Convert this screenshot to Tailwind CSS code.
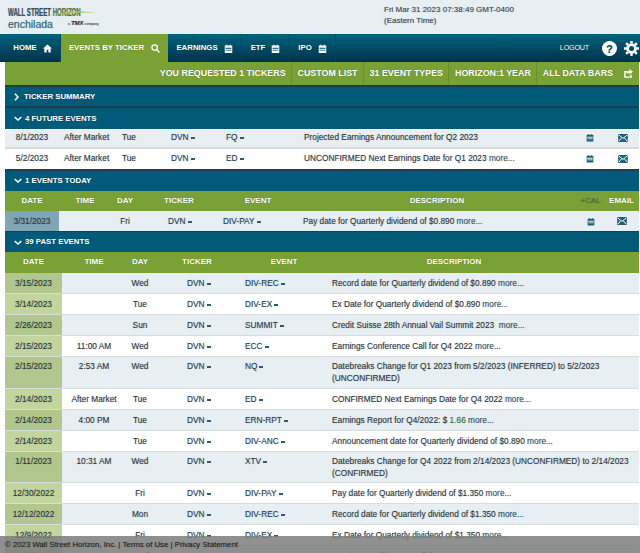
<!DOCTYPE html>
<html><head><meta charset="utf-8"><script src="https://cdn.jsdelivr.net/npm/@tailwindcss/browser@4"></script></head>
<body class="m-0 w-[640px] h-[553px] overflow-hidden relative bg-white font-['Liberation_Sans',Arial,sans-serif] text-[8.3px] text-[#2f3a40] [text-shadow:0_0_1px_rgba(30,40,50,.4)]">
<svg class="hidden"><defs>
<symbol id="cal" viewBox="0 0 12 12"><path fill="currentColor" d="M1 2h2V1h1.500v1h3V1H9v1h2v10H1zM2 5v1.200h8V5zm0 2.600v1.200h8V7.600z"/></symbol>
<symbol id="mail" viewBox="0 0 12 10"><path fill="currentColor" d="M0 0h12v10H0z"/><path fill="none" stroke="#fff" stroke-width="1.200" d="M.5 1 6 5.500 11.500 1M.8 9 4.500 4.500M11.200 9 7.500 4.500"/></symbol>
</defs></svg>

<header class="h-[34px] bg-[#e8eff2] flex">
  <div class="w-[384px] pl-2 pt-[7px] relative">
    <div class="font-bold text-[10px] leading-[11px] text-[#37505f] scale-x-[0.61] origin-left whitespace-nowrap">WALL STREET <span class="text-[#55743a]">HORIZON</span></div>
    <div class="flex items-center leading-[11px]"><span class="text-[10.5px] text-[#2d6a82]">enchilada</span><span class="ml-[15px] text-[3.500px] text-[#333] whitespace-nowrap">a <b class="text-[6px] italic">TMX</b> company</span></div>
    <svg class="absolute left-[50px] top-[10px] w-[46px] h-[7px]" viewBox="0 0 46 7"><path fill="#a9c46c" opacity=".85" d="M0 6C12 1 28 0 46 3 30 2.500 14 3 0 6z"/></svg>
  </div>
  <div class="pt-[4px] text-[#3c4a52] text-[8px] leading-[11px]"><div>Fri Mar 31 2023 07:38:49 GMT-0400</div><div>(Eastern Time)</div></div>
</header>

<nav class="h-[28px] bg-linear-to-b from-[#00627f] to-[#00344a] flex pl-[5px] text-white font-bold text-[7.800px] relative">
  <a class="w-[56px] flex items-center justify-center gap-[6px] border-r border-[#00475f]">HOME <svg class="w-[9px] h-[9px]" viewBox="0 0 10 10"><path fill="#fff" d="M5 .5 10 5H8.500v4.500H6V6.500H4v3H1.500V5H0z"/></svg></a>
  <a class="w-[107px] flex items-center justify-center gap-[7px] bg-[#7aa136]">EVENTS BY TICKER <svg class="w-[9px] h-[9px]" viewBox="0 0 10 10"><circle cx="4" cy="4" r="3" fill="none" stroke="#fff" stroke-width="1.400"/><path stroke="#fff" stroke-width="1.600" d="m6.200 6.200 3.200 3.200"/></svg></a>
  <a class="w-[74px] flex items-center justify-center gap-[6px] border-r border-[#00475f]">EARNINGS <svg class="w-[9px] h-[9px]"><use href="#cal"/></svg></a>
  <a class="w-[48px] flex items-center justify-center gap-[6px] border-r border-[#00475f]">ETF <svg class="w-[9px] h-[9px]"><use href="#cal"/></svg></a>
  <a class="w-[46px] flex items-center justify-center gap-[6px] border-r border-[#00475f]">IPO <svg class="w-[9px] h-[9px]"><use href="#cal"/></svg></a>
  <div class="flex-1 flex items-center justify-end pr-[1px] gap-[13px]">
    <span class="font-normal text-[7.200px] tracking-[-0.2px]">LOGOUT</span>
    <svg class="w-[15px] h-[15px]" viewBox="0 0 16 16"><circle cx="8" cy="8" r="8" fill="#fff"/><text x="8" y="12.500" text-anchor="middle" font-size="12" font-weight="700" fill="#004a63" font-family="Liberation Sans">?</text></svg>
    <svg class="w-[15px] h-[15px] -ml-[6px]" viewBox="0 0 16 16"><circle cx="8" cy="8" r="4.200" fill="none" stroke="#fff" stroke-width="3"/><path stroke="#fff" stroke-width="2.600" d="M8 0v3M8 13v3M0 8h3M13 8h3M2.300 2.300l2.100 2.100M11.600 11.600l2.100 2.100M2.300 13.700l2.100-2.100M11.600 4.400l2.100-2.100"/></svg>
  </div>
</nav>

<main class="ml-[5px] mr-px">
  <div class="h-[23px] bg-[#7aa136] flex justify-end items-center text-white font-bold text-[8.900px]">
    <span class="h-full flex items-center pl-[5px] pr-[5px] border-r border-[#6b8f2e]">YOU REQUESTED 1 TICKERS</span>
    <span class="h-full flex items-center pl-[6px] pr-[5px] border-r border-[#6b8f2e]">CUSTOM LIST</span>
    <span class="h-full flex items-center pl-[6px] pr-[5px] border-r border-[#6b8f2e]">31 EVENT TYPES</span>
    <span class="h-full flex items-center pl-[6px] pr-[5px] border-r border-[#6b8f2e]">HORIZON:1 YEAR</span>
    <span class="h-full flex items-center pl-[6px] pr-[6px] gap-[11px]">ALL DATA BARS <svg class="w-[9px] h-[9px]" viewBox="0 0 10 10"><path fill="none" stroke="#fff" stroke-width="1.500" d="M8 6.500V9H1V3h3"/><path fill="#fff" d="M6 0l4 3-4 3V4.500C4.500 4.500 3.500 5 3 6.500 3 3.500 4.500 2 6 2z"/></svg></span>
  </div>

  <div class="h-[21px] border-t-2 border-[#1d3f4d] bg-[#005a78] flex items-center pl-[9px] gap-[5px] text-white font-bold text-[7.800px]"><svg class="w-[5px] h-[8px]" viewBox="0 0 5 8"><path fill="none" stroke="#fff" stroke-width="1.600" d="m1 .7 3 3.300-3 3.300"/></svg>TICKER SUMMARY</div>
  <div class="h-[23px] border-t-2 border-[#1d3f4d] bg-[#005a78] flex items-center pl-[9px] gap-[3px] text-white font-bold text-[7.800px]"><svg class="w-[8px] h-[5px]" viewBox="0 0 8 5"><path fill="none" stroke="#fff" stroke-width="1.600" d="m.7 1 3.300 3 3.300-3"/></svg>4 FUTURE EVENTS</div>

  <div class="grid grid-cols-[54px_56px_49px_55px_78px_272px_42px_24px_1fr] h-[19px] pb-[2px] items-center bg-[#e8eff2] border-b-2 border-[#d8dcdc] mt-px">
    <span class="text-center">8/1/2023</span><span class="pl-[5px]">After Market</span><span class="pl-[7px]">Tue</span><span class="pl-[7px] text-[#1f4457]">DVN<i class="inline-block w-[4px] h-[2px] ml-[2px] align-middle bg-[#2c5a70]"></i></span><span class="pl-[7px] text-[#1f4457]">FQ<i class="inline-block w-[4px] h-[2px] ml-[2px] align-middle bg-[#2c5a70]"></i></span><span class="pl-[7px]">Projected Earnings Announcement for Q2 2023</span><svg class="w-[8px] h-[9px] mx-auto text-[#1f5f78]"><use href="#cal"/></svg><svg class="w-[10px] h-[8px] mx-auto text-[#1f5f78]"><use href="#mail"/></svg>
  </div>
  <div class="grid grid-cols-[54px_56px_49px_55px_78px_272px_42px_24px_1fr] h-[20px] pb-[1px] items-center bg-white">
    <span class="text-center">5/2/2023</span><span class="pl-[5px]">After Market</span><span class="pl-[7px]">Tue</span><span class="pl-[7px] text-[#1f4457]">DVN<i class="inline-block w-[4px] h-[2px] ml-[2px] align-middle bg-[#2c5a70]"></i></span><span class="pl-[7px] text-[#1f4457]">ED<i class="inline-block w-[4px] h-[2px] ml-[2px] align-middle bg-[#2c5a70]"></i></span><span class="pl-[7px]">UNCONFIRMED Next Earnings Date for Q1 2023 <span class="text-[#2c5a70]">more...</span></span><svg class="w-[8px] h-[9px] mx-auto text-[#1f5f78]"><use href="#cal"/></svg><svg class="w-[10px] h-[8px] mx-auto text-[#1f5f78]"><use href="#mail"/></svg>
  </div>

  <div class="h-[22px] border-t-2 border-[#1d3f4d] bg-[#005a78] flex items-center pl-[9px] gap-[3px] pb-px text-white font-bold text-[7.800px]"><svg class="w-[8px] h-[5px]" viewBox="0 0 8 5"><path fill="none" stroke="#fff" stroke-width="1.600" d="m.7 1 3.300 3 3.300-3"/></svg>1 EVENTS TODAY</div>
  <div class="grid grid-cols-[54px_52px_28px_80px_78px_280px_27px_1fr] h-[20px] pb-px items-center bg-[#7aa136] text-white font-bold text-center text-[8px]">
    <span>DATE</span><span>TIME</span><span>DAY</span><span>TICKER</span><span>EVENT</span><span>DESCRIPTION</span><span class="text-[#3f6f4f] font-normal">+CAL</span><span>EMAIL</span>
  </div>
  <div class="grid grid-cols-[54px_52px_28px_80px_78px_280px_27px_1fr] h-[21px] items-center bg-[#e8eff2] border-b border-[#1d3f4d]">
    <span class="bg-[#7fa6b7] h-full flex items-center justify-center">3/31/2023</span><span></span><span class="text-center">Fri</span><span class="pl-[29px] text-[#1f4457]">DVN<i class="inline-block w-[4px] h-[2px] ml-[2px] align-middle bg-[#2c5a70]"></i></span><span class="pl-[4px] text-[#1f4457]">DIV-PAY<i class="inline-block w-[4px] h-[2px] ml-[2px] align-middle bg-[#2c5a70]"></i></span><span class="pl-[6px]">Pay date for Quarterly dividend of $0.890 <span class="text-[#2c5a70]">more...</span></span><svg class="w-[8px] h-[9px] mx-auto text-[#1f5f78]"><use href="#cal"/></svg><svg class="w-[10px] h-[8px] mx-auto text-[#1f5f78]"><use href="#mail"/></svg>
  </div>

  <div class="h-[20px] bg-[#005a78] flex items-center pl-[9px] gap-[3px] text-white font-bold text-[7.800px]"><svg class="w-[8px] h-[5px]" viewBox="0 0 8 5"><path fill="none" stroke="#fff" stroke-width="1.600" d="m.7 1 3.300 3 3.300-3"/></svg>39 PAST EVENTS</div>
  <div class="grid grid-cols-[57px_64px_28px_86px_88px_252px_1fr] h-[21px] pb-[2px] items-center bg-[#7aa136] text-white font-bold text-center text-[8px]">
    <span>DATE</span><span>TIME</span><span>DAY</span><span>TICKER</span><span>EVENT</span><span>DESCRIPTION</span>
  </div>

  <div class="grid grid-cols-[57px_64px_28px_86px_88px_1fr] h-[21px] items-center bg-[#e8eff2] border-b border-[#d8dcdc] text-center"><span class="h-full flex items-center justify-center bg-[#b1c78d]">3/15/2023</span><span></span><span>Wed</span><span class="text-left pl-[33px] text-[#1f4457]">DVN<i class="inline-block w-[4px] h-[2px] ml-[2px] align-middle bg-[#2c5a70]"></i></span><span class="text-left pl-[5px] text-[#1f4457]">DIV-REC<i class="inline-block w-[4px] h-[2px] ml-[2px] align-middle bg-[#2c5a70]"></i></span><span class="text-left pl-[4px]">Record date for Quarterly dividend of $0.890 <span class="text-[#2c5a70]">more...</span></span></div>
  <div class="grid grid-cols-[57px_64px_28px_86px_88px_1fr] h-[21px] items-center bg-white border-b border-[#d8dcdc] text-center"><span class="h-full flex items-center justify-center bg-[#c1d59c]">3/14/2023</span><span></span><span>Tue</span><span class="text-left pl-[33px] text-[#1f4457]">DVN<i class="inline-block w-[4px] h-[2px] ml-[2px] align-middle bg-[#2c5a70]"></i></span><span class="text-left pl-[5px] text-[#1f4457]">DIV-EX<i class="inline-block w-[4px] h-[2px] ml-[2px] align-middle bg-[#2c5a70]"></i></span><span class="text-left pl-[4px]">Ex Date for Quarterly dividend of $0.890 <span class="text-[#2c5a70]">more...</span></span></div>
  <div class="grid grid-cols-[57px_64px_28px_86px_88px_1fr] h-[21px] items-center bg-[#e8eff2] border-b border-[#d8dcdc] text-center"><span class="h-full flex items-center justify-center bg-[#b1c78d]">2/26/2023</span><span></span><span>Sun</span><span class="text-left pl-[33px] text-[#1f4457]">DVN<i class="inline-block w-[4px] h-[2px] ml-[2px] align-middle bg-[#2c5a70]"></i></span><span class="text-left pl-[5px] text-[#1f4457]">SUMMIT<i class="inline-block w-[4px] h-[2px] ml-[2px] align-middle bg-[#2c5a70]"></i></span><span class="text-left pl-[4px]">Credit Suisse 28th Annual Vail Summit 2023 &nbsp;<span class="text-[#2c5a70]">more...</span></span></div>
  <div class="grid grid-cols-[57px_64px_28px_86px_88px_1fr] h-[21px] items-center bg-white border-b border-[#d8dcdc] text-center"><span class="h-full flex items-center justify-center bg-[#c1d59c]">2/15/2023</span><span>11:00 AM</span><span>Wed</span><span class="text-left pl-[33px] text-[#1f4457]">DVN<i class="inline-block w-[4px] h-[2px] ml-[2px] align-middle bg-[#2c5a70]"></i></span><span class="text-left pl-[5px] text-[#1f4457]">ECC<i class="inline-block w-[4px] h-[2px] ml-[2px] align-middle bg-[#2c5a70]"></i></span><span class="text-left pl-[4px]">Earnings Conference Call for Q4 2022 <span class="text-[#2c5a70]">more...</span></span></div>
  <div class="grid grid-cols-[57px_64px_28px_86px_88px_1fr] h-[32px] items-stretch [&>span]:pt-[3px] leading-[12px] bg-[#e8eff2] border-b border-[#d8dcdc] text-center"><span class="bg-[#b1c78d]">2/15/2023</span><span>2:53 AM</span><span>Wed</span><span class="text-left pl-[33px] text-[#1f4457]">DVN<i class="inline-block w-[4px] h-[2px] ml-[2px] align-middle bg-[#2c5a70]"></i></span><span class="text-left pl-[5px] text-[#1f4457]">NQ<i class="inline-block w-[4px] h-[2px] ml-[2px] align-middle bg-[#2c5a70]"></i></span><span class="text-left pl-[4px] w-[285px]">Datebreaks Change for Q1 2023 from 5/2/2023 (INFERRED) to 5/2/2023 (UNCONFIRMED)</span></div>
  <div class="grid grid-cols-[57px_64px_28px_86px_88px_1fr] h-[21px] items-center bg-white border-b border-[#d8dcdc] text-center"><span class="h-full flex items-center justify-center bg-[#c1d59c]">2/14/2023</span><span>After Market</span><span>Tue</span><span class="text-left pl-[33px] text-[#1f4457]">DVN<i class="inline-block w-[4px] h-[2px] ml-[2px] align-middle bg-[#2c5a70]"></i></span><span class="text-left pl-[5px] text-[#1f4457]">ED<i class="inline-block w-[4px] h-[2px] ml-[2px] align-middle bg-[#2c5a70]"></i></span><span class="text-left pl-[4px]">CONFIRMED Next Earnings Date for Q4 2022 <span class="text-[#2c5a70]">more...</span></span></div>
  <div class="grid grid-cols-[57px_64px_28px_86px_88px_1fr] h-[21px] items-center bg-[#e8eff2] border-b border-[#d8dcdc] text-center"><span class="h-full flex items-center justify-center bg-[#b1c78d]">2/14/2023</span><span>4:00 PM</span><span>Tue</span><span class="text-left pl-[33px] text-[#1f4457]">DVN<i class="inline-block w-[4px] h-[2px] ml-[2px] align-middle bg-[#2c5a70]"></i></span><span class="text-left pl-[5px] text-[#1f4457]">ERN-RPT<i class="inline-block w-[4px] h-[2px] ml-[2px] align-middle bg-[#2c5a70]"></i></span><span class="text-left pl-[4px]">Earnings Report for Q4/2022: $ <span class="text-[#2e7d32]">1.66</span> <span class="text-[#2c5a70]">more...</span></span></div>
  <div class="grid grid-cols-[57px_64px_28px_86px_88px_1fr] h-[21px] items-center bg-white border-b border-[#d8dcdc] text-center"><span class="h-full flex items-center justify-center bg-[#c1d59c]">2/14/2023</span><span></span><span>Tue</span><span class="text-left pl-[33px] text-[#1f4457]">DVN<i class="inline-block w-[4px] h-[2px] ml-[2px] align-middle bg-[#2c5a70]"></i></span><span class="text-left pl-[5px] text-[#1f4457]">DIV-ANC<i class="inline-block w-[4px] h-[2px] ml-[2px] align-middle bg-[#2c5a70]"></i></span><span class="text-left pl-[4px]">Announcement date for Quarterly dividend of $0.890 <span class="text-[#2c5a70]">more...</span></span></div>
  <div class="grid grid-cols-[57px_64px_28px_86px_88px_1fr] h-[31px] items-stretch [&>span]:pt-[3px] leading-[12px] bg-[#e8eff2] border-b border-[#d8dcdc] text-center"><span class="bg-[#b1c78d]">1/11/2023</span><span>10:31 AM</span><span>Wed</span><span class="text-left pl-[33px] text-[#1f4457]">DVN<i class="inline-block w-[4px] h-[2px] ml-[2px] align-middle bg-[#2c5a70]"></i></span><span class="text-left pl-[5px] text-[#1f4457]">XTV<i class="inline-block w-[4px] h-[2px] ml-[2px] align-middle bg-[#2c5a70]"></i></span><span class="text-left pl-[4px] w-[306px]">Datebreaks Change for Q4 2022 from 2/14/2023 (UNCONFIRMED) to 2/14/2023 (CONFIRMED)</span></div>
  <div class="grid grid-cols-[57px_64px_28px_86px_88px_1fr] h-[21px] items-center bg-white border-b border-[#d8dcdc] text-center"><span class="h-full flex items-center justify-center bg-[#c1d59c]">12/30/2022</span><span></span><span>Fri</span><span class="text-left pl-[33px] text-[#1f4457]">DVN<i class="inline-block w-[4px] h-[2px] ml-[2px] align-middle bg-[#2c5a70]"></i></span><span class="text-left pl-[5px] text-[#1f4457]">DIV-PAY<i class="inline-block w-[4px] h-[2px] ml-[2px] align-middle bg-[#2c5a70]"></i></span><span class="text-left pl-[4px]">Pay date for Quarterly dividend of $1.350 <span class="text-[#2c5a70]">more...</span></span></div>
  <div class="grid grid-cols-[57px_64px_28px_86px_88px_1fr] h-[21px] items-center bg-[#e8eff2] border-b border-[#d8dcdc] text-center"><span class="h-full flex items-center justify-center bg-[#b1c78d]">12/12/2022</span><span></span><span>Mon</span><span class="text-left pl-[33px] text-[#1f4457]">DVN<i class="inline-block w-[4px] h-[2px] ml-[2px] align-middle bg-[#2c5a70]"></i></span><span class="text-left pl-[5px] text-[#1f4457]">DIV-REC<i class="inline-block w-[4px] h-[2px] ml-[2px] align-middle bg-[#2c5a70]"></i></span><span class="text-left pl-[4px]">Record date for Quarterly dividend of $1.350 <span class="text-[#2c5a70]">more...</span></span></div>
  <div class="grid grid-cols-[57px_64px_28px_86px_88px_1fr] h-[21px] items-center bg-white border-b border-[#d8dcdc] text-center"><span class="h-full flex items-center justify-center bg-[#c1d59c]">12/9/2022</span><span></span><span>Fri</span><span class="text-left pl-[33px] text-[#1f4457]">DVN<i class="inline-block w-[4px] h-[2px] ml-[2px] align-middle bg-[#2c5a70]"></i></span><span class="text-left pl-[5px] text-[#1f4457]">DIV-EX<i class="inline-block w-[4px] h-[2px] ml-[2px] align-middle bg-[#2c5a70]"></i></span><span class="text-left pl-[4px]">Ex Date for Quarterly dividend of $1.350 <span class="text-[#2c5a70]">more...</span></span></div>
  <div class="grid grid-cols-[57px_64px_28px_86px_88px_1fr] h-[21px] items-center bg-[#e8eff2] text-center"><span class="h-full flex items-center justify-center bg-[#b1c78d]">11/2/2022</span><span>11:00 AM</span><span>Wed</span><span class="text-left pl-[33px] text-[#1f4457]">DVN<i class="inline-block w-[4px] h-[2px] ml-[2px] align-middle bg-[#2c5a70]"></i></span><span class="text-left pl-[5px] text-[#1f4457]">ECC<i class="inline-block w-[4px] h-[2px] ml-[2px] align-middle bg-[#2c5a70]"></i></span><span class="text-left pl-[4px]">Earnings Conference Call for Q3 2022</span></div>
</main>

<footer class="absolute left-0 right-0 bottom-0 h-[17px] bg-[#7c7c7c]/85 flex items-center pl-[5px] text-[7.800px] text-[#222]">© 2023 Wall Street Horizon, Inc. | Terms of Use | Privacy Statement</footer>
</body></html>
